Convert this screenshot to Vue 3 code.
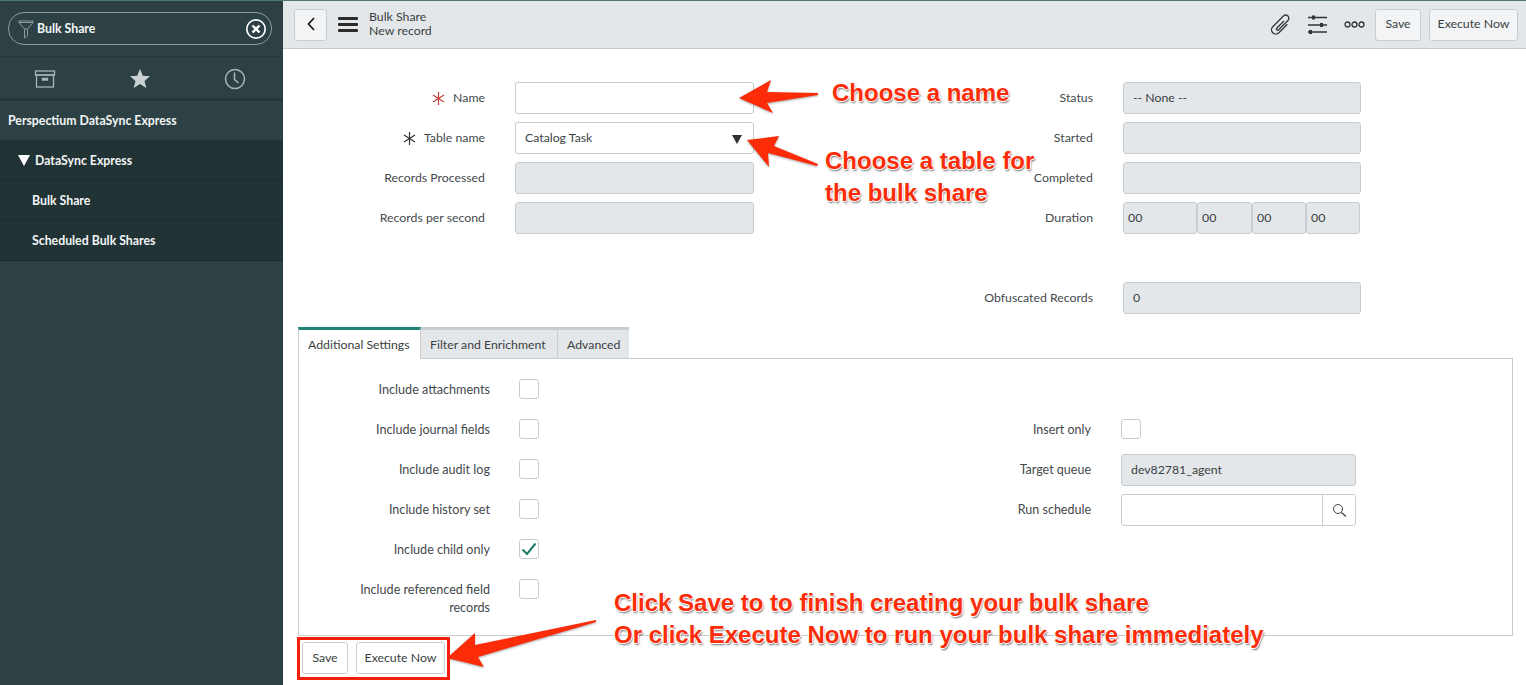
<script setup>
const durations = ['00', '00', '00', '00']
const checks = [
  { label: 'Include attachments', on: false },
  { label: 'Include journal fields', on: false },
  { label: 'Include audit log', on: false },
  { label: 'Include history set', on: false },
  { label: 'Include child only', on: true },
  { label: 'Include referenced field records', on: false },
]
</script>

<template>
  <div class="page">
    <aside class="side">
      <div class="search-wrap">
        <div class="pill">
          <svg class="funnel" width="16" height="20" viewBox="0 0 16 20" fill="none" stroke="#8b9a9c" stroke-width="1">
            <path d="M1 2h14v1.500L9.500 10v6.500L6.500 19V10L1 3.500z" />
            <path d="M1 3.500h14M6.500 10h3" />
          </svg>
          <span class="pill-text">Bulk Share</span>
          <svg class="clear" width="22" height="22" viewBox="0 0 22 22" fill="none" stroke="#fff">
            <circle cx="11" cy="11" r="9.200" stroke-width="1.700" />
            <path d="M7.500 7.500l7 7M14.500 7.500l-7 7" stroke-width="2.400" />
          </svg>
        </div>
      </div>
      <div class="nav-tabs">
        <svg width="22" height="20" viewBox="0 0 22 20" fill="none" stroke="#a9b4b5" stroke-width="1.300">
          <rect x="1.500" y="2" width="19" height="4" />
          <rect x="2.500" y="6" width="17" height="12" />
          <path d="M8.500 9.500h5v1.500h-5z" />
        </svg>
        <svg width="22" height="20" viewBox="0 0 22 20" fill="#c9d1d2">
          <path d="M11 0l2.800 6.800 7.200.5-5.500 4.600 1.800 7.100L11 15.100 4.700 19l1.800-7.100L1 7.300l7.200-.5z" />
        </svg>
        <svg width="22" height="22" viewBox="0 0 22 22" fill="none" stroke="#a9b4b5" stroke-width="1.500">
          <circle cx="11" cy="11" r="9.500" />
          <path d="M10.500 4.500v7l4 3.500" />
        </svg>
      </div>
      <div class="app-row">Perspectium DataSync Express</div>
      <div class="mod-row first"><span class="tri"></span>DataSync Express</div>
      <div class="mod-row sub">Bulk Share</div>
      <div class="mod-row sub">Scheduled Bulk Shares</div>
    </aside>

    <main class="main">
      <header class="head">
        <button class="btn back" type="button">
          <svg width="10" height="16" viewBox="0 0 10 16" fill="none" stroke="#222" stroke-width="1.800">
            <path d="M8 2L2.500 8 8 14" />
          </svg>
        </button>
        <svg class="burger" width="20" height="15" viewBox="0 0 20 15" fill="#2b2b2b">
          <rect width="20" height="3" rx="1" />
          <rect y="6" width="20" height="3" rx="1" />
          <rect y="12" width="20" height="3" rx="1" />
        </svg>
        <div class="title"><div>Bulk Share</div><div>New record</div></div>
        <div class="head-actions">
          <svg class="clip" width="24" height="24" viewBox="0 0 24 24" fill="none" stroke="#3a3a3a" stroke-width="1.400">
            <path transform="rotate(45 12 12)" d="M16 7v12a4.300 4.300 0 0 1-8.600 0V4a3.200 3.200 0 0 1 6.400 0v13a1.300 1.300 0 0 1-2.600 0V7" />
          </svg>
          <svg class="sliders" width="20" height="20" viewBox="0 0 20 20" fill="#333" stroke="#333">
            <path d="M1 2.500h19M1 10h19M1 17h19" stroke-width="1.300" />
            <rect x="5" y="0.500" width="3" height="4" stroke="none" />
            <rect x="13" y="8" width="3" height="4" stroke="none" />
            <rect x="2" y="15" width="3" height="4" stroke="none" />
          </svg>
          <svg class="dots" width="21" height="7" viewBox="0 0 21 7" fill="none" stroke="#333" stroke-width="1.300">
            <circle cx="3.500" cy="3.500" r="2.500" />
            <circle cx="10.500" cy="3.500" r="2.500" />
            <circle cx="17.500" cy="3.500" r="2.500" />
          </svg>
          <button class="btn save" type="button">Save</button>
          <button class="btn exec" type="button">Execute Now</button>
        </div>
      </header>

      <section class="form">
        <label class="lbl"><svg class="ast" width="13" height="13" viewBox="0 0 13 13" stroke="#c83c36" stroke-width="1.200"><path d="M6.500 0v13M1 3l11 7M12 3L1 10" /></svg>Name</label>
        <div class="field fl"></div>
        <label class="lbl">Status</label>
        <div class="field ro fr">-- None --</div>

        <label class="lbl"><svg class="ast" width="13" height="13" viewBox="0 0 13 13" stroke="#333" stroke-width="1.200"><path d="M6.500 0v13M1 3l11 7M12 3L1 10" /></svg>Table name</label>
        <div class="field fl select">Catalog Task<span class="caret"></span></div>
        <label class="lbl">Started</label>
        <div class="field ro fr"></div>

        <label class="lbl">Records Processed</label>
        <div class="field ro fl"></div>
        <label class="lbl">Completed</label>
        <div class="field ro fr"></div>

        <label class="lbl">Records per second</label>
        <div class="field ro fl"></div>
        <label class="lbl">Duration</label>
        <div class="dur fr">
          <span v-for="(d, i) in durations" :key="i" class="dur-cell">{{ d }}</span>
        </div>

        <label class="lbl obf-l">Obfuscated Records</label>
        <div class="field ro fr obf-f">0</div>
      </section>

      <div class="tabs">
        <div class="tab active">Additional Settings</div>
        <div class="tab">Filter and Enrichment</div>
        <div class="tab">Advanced</div>
      </div>
      <section class="panel">
        <div class="col-left">
          <div v-for="c in checks" :key="c.label" class="row">
            <span class="row-lbl">{{ c.label }}</span>
            <span class="check">
              <svg v-if="c.on" width="16" height="14" viewBox="0 0 16 14" fill="none" stroke="#1f7a6c" stroke-width="2">
                <path d="M1.500 7.500L6 12 14.500 1.500" />
              </svg>
            </span>
          </div>
        </div>
        <div class="col-right">
          <div class="row">
            <span class="row-lbl">Insert only</span>
            <span class="check"></span>
          </div>
          <div class="row">
            <span class="row-lbl">Target queue</span>
            <div class="field ro wide">dev82781_agent</div>
          </div>
          <div class="row">
            <span class="row-lbl">Run schedule</span>
            <div class="field wide lookup">
              <span class="lookup-btn">
                <svg width="15" height="15" viewBox="0 0 15 15" fill="none" stroke="#444" stroke-width="1">
                  <circle cx="6" cy="6" r="4.500" />
                  <path d="M9.500 9.500l4.500 4" stroke-width="1.300" />
                </svg>
              </span>
            </div>
          </div>
        </div>
      </section>
      <div class="foot">
        <button class="btn foot-save" type="button">Save</button>
        <button class="btn foot-exec" type="button">Execute Now</button>
      </div>
    </main>

    <div class="overlay">
      <svg class="arrows" width="1526" height="685" viewBox="0 0 1526 685">
        <g fill="#fb2c07" class="arrow-g">
          <polygon points="739,98 771,80 767,92 818,93 818,95 767,103 773,113" />
          <polygon points="747,140 779,136 774,146 818,164 817,166 768,153 769,167" />
          <polygon points="447,658 475,633 475,645 596,620 596,622 478,657 484,667" />
        </g>
      </svg>
      <div class="red-box"></div>
      <div class="note n1">Choose a name</div>
      <div class="note n2">Choose a table for<br />the bulk share</div>
      <div class="note n3">Click Save to to finish creating your bulk share<br />Or click Execute Now to run your bulk share immediately</div>
    </div>
  </div>
</template>

<style>
html, body { margin: 0; padding: 0; background: #fff; overflow: hidden; }
</style>

<style scoped>
.page {
  position: relative;
  display: flex;
  width: 1526px;
  height: 685px;
  overflow: hidden;
  font-family: Lato, "Noto Sans", sans-serif;
  font-size: 12.300px;
  color: #3a3f42;
  background: #fff;
  border-top: 1px solid #4d7a6c;
  box-sizing: border-box;
}
.side {
  width: 283px;
  flex: none;
  background: #2d4144;
  color: #fff;
  display: flex;
  flex-direction: column;
}
.search-wrap {
  height: 56px;
  padding: 11px 11px 0 8px;
  box-sizing: border-box;
  border-bottom: 1px solid #263739;
}
.pill {
  height: 31px;
  border: 1px solid #8c9a9c;
  border-radius: 16px;
  display: flex;
  align-items: center;
  padding: 0 4px 0 9px;
}
.funnel { flex: none; }
.pill-text { margin-left: 3px; flex: 1; font-weight: 700; color: #f2f5f5; }
.nav-tabs {
  height: 39px;
  padding-top: 2px;
  margin-left: -2.500px;
  display: grid;
  grid-template-columns: repeat(3, 95px);
  justify-items: center;
  align-items: center;
  border-bottom: 3px solid #253639;
}
.app-row {
  height: 39px;
  line-height: 39px;
  padding-left: 8px;
  font-weight: 700;
  color: #f2f5f5;
}
.mod-row {
  height: 40px;
  box-sizing: border-box;
  line-height: 39px;
  background: #223336;
  border-bottom: 1px solid #1b2a2c;
  color: #f2f5f5;
  font-weight: 700;
}
.mod-row.first { height: 41px; padding-left: 18px; display: flex; align-items: center; }
.mod-row.sub { padding-left: 32px; }
.tri {
  width: 0;
  height: 0;
  margin-right: 5px;
  border-left: 6.500px solid transparent;
  border-right: 6.500px solid transparent;
  border-top: 11px solid #fff;
}
.main { flex: 1; min-width: 0; display: flex; flex-direction: column; }
.head {
  height: 48px;
  box-sizing: border-box;
  background: #e4e7ea;
  border-bottom: 1px solid #c9cccf;
  display: flex;
  align-items: center;
  padding: 0 8px 0 11px;
}
.btn {
  height: 32px;
  box-sizing: border-box;
  padding: 0 0 2px;
  border: 1px solid #cacdd0;
  border-radius: 3px;
  background: #fff;
  color: #3a3f42;
  font: inherit;
}
.head .btn { background: #f2f4f6; }
.back { width: 33px; display: flex; align-items: center; justify-content: center; }
.burger { margin-left: 11px; flex: none; }
.title { margin-left: 11px; margin-bottom: 2px; line-height: 14px; }
.head-actions { margin-left: auto; display: flex; align-items: center; }
.clip { margin-right: 14px; }
.sliders { margin-right: 17px; }
.dots { margin-right: 10px; }
.save { width: 46px; }
.exec { width: 89px; margin-left: 8px; }
.form {
  display: grid;
  grid-template-columns: 202px 269px 339px 268px;
  grid-auto-rows: 32px;
  row-gap: 8px;
  padding-top: 33px;
}
.fl { margin-left: 30px; width: 239px; }
.fr { margin-left: 30px; width: 238px; }
.obf-l { grid-column: 3; grid-row: 6; }
.obf-f { grid-column: 4; grid-row: 6; }
.lbl {
  display: flex;
  align-items: center;
  justify-content: flex-end;
  padding-bottom: 2px;
  color: #44494c;
}
.ast { margin-right: 8px; margin-top: 2px; }
.field {
  height: 32px;
  box-sizing: border-box;
  border: 1px solid #c9cccf;
  border-radius: 3px;
  background: #fff;
  display: flex;
  align-items: center;
  padding: 0 9px 1px;
}
.field.ro { background: #e4e7ea; }
.select { justify-content: space-between; }
.caret {
  width: 0;
  height: 0;
  margin-right: 2px;
  margin-top: 3px;
  border-left: 5px solid transparent;
  border-right: 5px solid transparent;
  border-top: 9px solid #2e3234;
}
.dur { display: flex; height: 32px; }
.dur-cell {
  flex: 0 0 54px;
  box-sizing: border-box;
  height: 32px;
  line-height: 30px;
  background: #e4e7ea;
  border: 1px solid #c9cccf;
  border-radius: 3px;
  padding-left: 4px;
}
.dur-cell:first-child { flex-basis: 74px; }
.dur-cell:nth-child(2) { flex-basis: 55px; }
.tabs {
  display: flex;
  margin: 13px 0 0 15px;
  height: 31px;
  position: relative;
  z-index: 1;
}
.tab {
  box-sizing: border-box;
  height: 32px;
  padding: 0 9px;
  line-height: 29px;
  white-space: nowrap;
  background: #e4e7ea;
  border-top: 3px solid #c9cccf;
  border-right: 1px solid #c9cccf;
  border-bottom: 1px solid #c9cccf;
}
.tab.active {
  width: 123px;
  background: #fff;
  border-top-color: #1f8476;
  border-left: 1px solid #c9cccf;
  border-bottom-color: #fff;
}
.tab:nth-child(2) { width: 137px; }
.tab:nth-child(3) { width: 71px; border-right: 0; }
.panel {
  display: flex;
  box-sizing: border-box;
  width: 1215px;
  height: 278px;
  margin-left: 15px;
  border: 1px solid #c9cccf;
  padding-top: 14px;
}
.col-left { width: 241px; flex: none; }
.col-right { margin-left: 461px; padding-top: 40px; }
.row {
  min-height: 32px;
  margin-bottom: 8px;
  display: grid;
  align-items: center;
}
.col-right .row:first-child { margin-bottom: 9px; }
.col-right .row:first-child .row-lbl { margin-top: 2px; }
.col-left .row { grid-template-columns: 191px 20px; column-gap: 29px; }
.col-right .row { grid-template-columns: 90px auto; column-gap: 30px; }
.row-lbl { text-align: right; line-height: 18px; color: #44494c; font-size: 12.500px; }
.col-left .row-lbl { padding-left: 45px; font-size: 12.600px; margin-top: 2px; }
.col-left .row:last-child { align-items: start; padding-top: 6px; }
.check {
  width: 20px;
  height: 20px;
  box-sizing: border-box;
  border: 1px solid #c9cccf;
  border-radius: 3px;
  background: #fff;
  display: flex;
  align-items: center;
  justify-content: center;
}
.field.wide { width: 235px; }
.lookup { justify-content: flex-end; padding: 0; }
.lookup-btn {
  width: 32px;
  height: 30px;
  border-left: 1px solid #c9cccf;
  display: flex;
  align-items: center;
  justify-content: center;
}
.foot {
  display: flex;
  gap: 8px;
  margin: 6px 0 0 19px;
}
.foot-save { width: 46px; }
.foot-exec { width: 89px; }
.overlay { position: absolute; inset: -1px 0 0 0; pointer-events: none; }
.arrows { position: absolute; left: 0; top: 0; }
.arrow-g { filter: drop-shadow(0 1px 1px rgba(0, 0, 0, 0.35)); }
.red-box {
  position: absolute;
  left: 297px;
  top: 637px;
  width: 153px;
  height: 43px;
  box-sizing: border-box;
  border: 3px solid #f5200a;
}
.note {
  position: absolute;
  font-family: "Liberation Sans", Arial, sans-serif;
  font-weight: 700;
  font-size: 24px;
  line-height: 32px;
  color: #fb2c07;
  white-space: nowrap;
  text-shadow: -1px 0 0 #fff, 1px 0 0 #fff, 0 -1px 0 #fff, 0 1px 0 #fff, 1px 2px 2px rgba(0, 0, 0, 0.55);
}
.n1 { left: 832px; top: 77px; }
.n2 { left: 825px; top: 145px; }
.n3 { left: 614px; top: 587px; }
</style>
